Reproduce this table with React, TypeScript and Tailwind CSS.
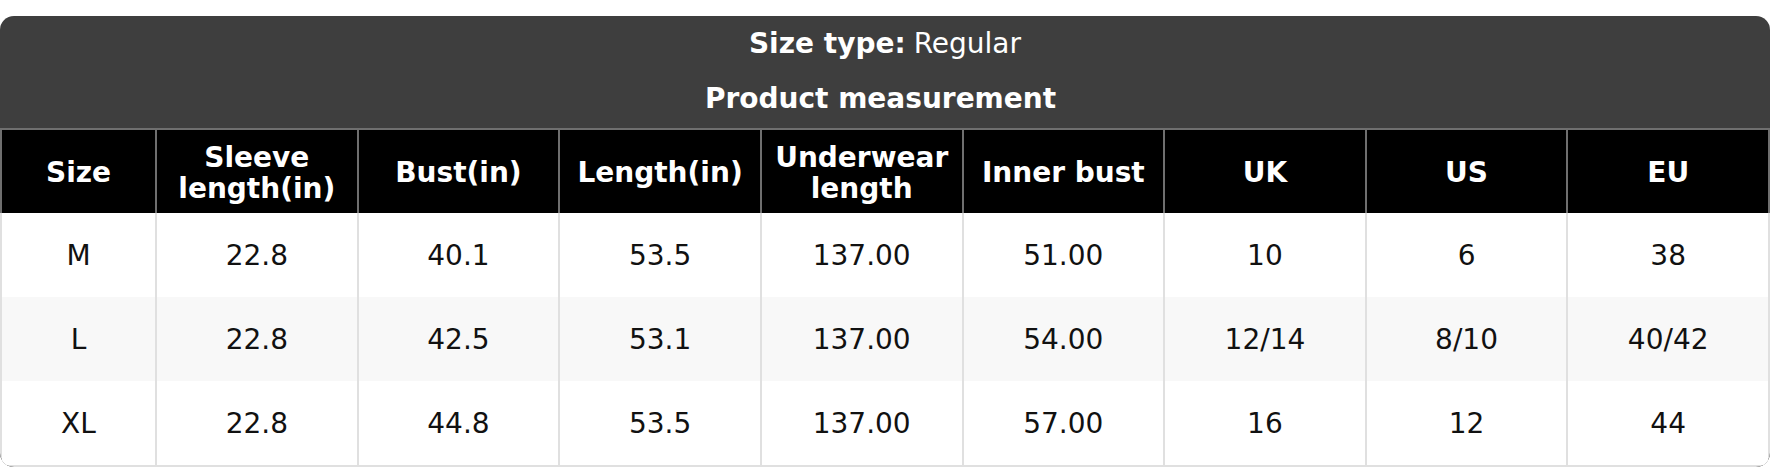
import React from "react";

const headers = [
  "Size",
  "Sleeve\nlength(in)",
  "Bust(in)",
  "Length(in)",
  "Underwear\nlength",
  "Inner bust",
  "UK",
  "US",
  "EU",
];

const rows = [
  ["M", "22.8", "40.1", "53.5", "137.00", "51.00", "10", "6", "38"],
  ["L", "22.8", "42.5", "53.1", "137.00", "54.00", "12/14", "8/10", "40/42"],
  ["XL", "22.8", "44.8", "53.5", "137.00", "57.00", "16", "12", "44"],
];

const cols = "grid grid-cols-[153px_repeat(8,minmax(0,1fr))]";

const App = () => {
  return (
    <div className="w-[1770px] bg-white pt-[16px] font-['DejaVu_Sans',sans-serif]">
      <div className="rounded-[14px] overflow-hidden bg-[#3e3e3e]">
        {/* Title block */}
        <div className="h-[54px] flex items-end justify-center pb-[9px] text-[28px] leading-[34px] text-white">
          <span className="font-bold">Size type:</span>
          <span className="ml-[8px]">Regular</span>
        </div>
        <div className="h-[58px] flex items-center justify-center pr-[9px] text-[28px] leading-[34px] font-bold text-white">
          Product measurement
        </div>

        {/* Header row */}
        <div className={`${cols} h-[85px] bg-black border-t-2 border-x-2 border-[#6f6f6f]`}>
          {headers.map((h, i) => (
            <div
              key={h}
              className={`flex items-center justify-center pt-[2px] text-center whitespace-pre-line text-[28px] leading-[31px] font-bold text-white ${
                i > 0 ? "border-l-2 border-[#6f6f6f]" : ""
              }`}
            >
              {h}
            </div>
          ))}
        </div>

        {/* Body */}
        <div className="bg-white border-x-2 border-b-2 border-[#e0e0e0] rounded-b-[14px]">
          {rows.map((r, ri) => (
            <div key={ri} className={`${cols} h-[84px] ${ri === 1 ? "bg-[#f8f8f8]" : "bg-white"}`}>
              {r.map((c, ci) => (
                <div
                  key={ci}
                  className={`flex items-center justify-center pt-[2px] text-[28px] text-[#111] ${
                    ci > 0 ? "border-l-2 border-[#e0e0e0]" : ""
                  }`}
                >
                  {c}
                </div>
              ))}
            </div>
          ))}
        </div>
      </div>
    </div>
  );
};

export default App;
